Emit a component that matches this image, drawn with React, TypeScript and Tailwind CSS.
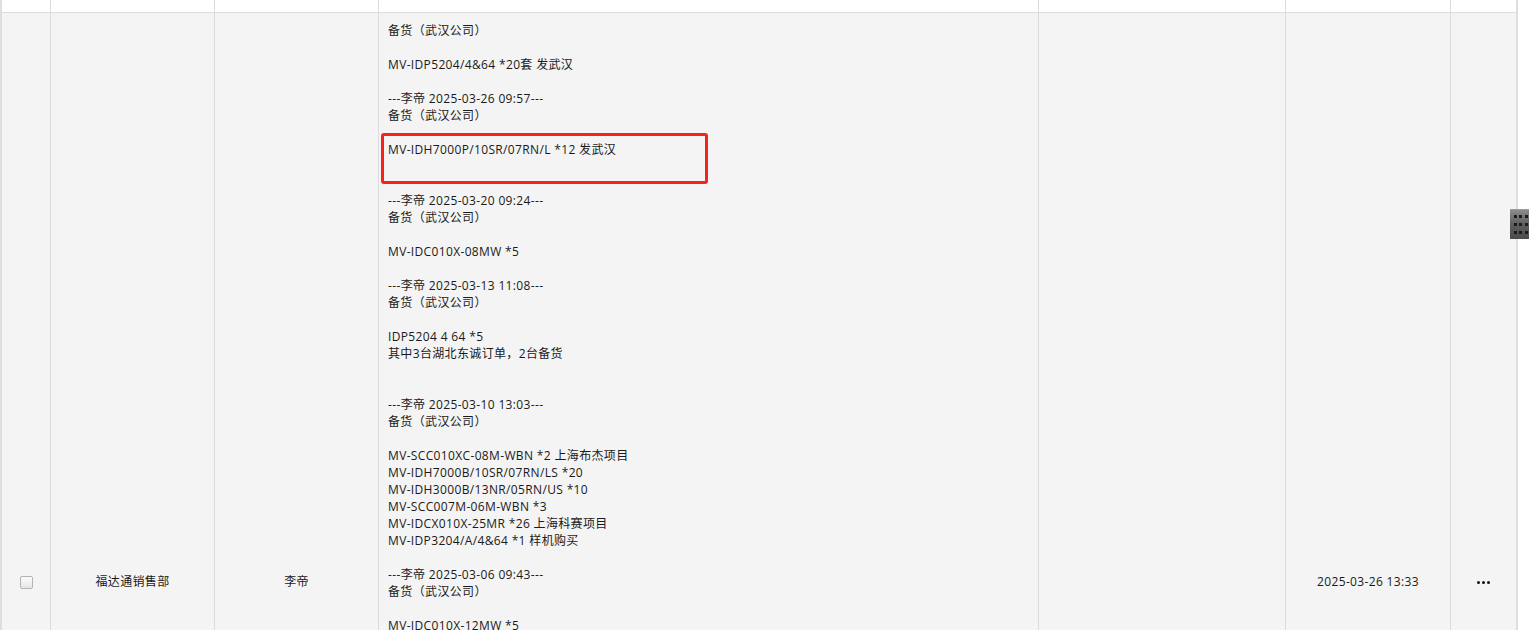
const notes = `备货（武汉公司）

MV-IDP5204/4&64 *20套 发武汉

---李帝 2025-03-26 09:57---
备货（武汉公司）

MV-IDH7000P/10SR/07RN/L *12 发武汉


---李帝 2025-03-20 09:24---
备货（武汉公司）

MV-IDC010X-08MW *5

---李帝 2025-03-13 11:08---
备货（武汉公司）

IDP5204 4 64 *5
其中3台湖北东诚订单，2台备货


---李帝 2025-03-10 13:03---
备货（武汉公司）

MV-SCC010XC-08M-WBN *2 上海布杰项目
MV-IDH7000B/10SR/07RN/LS *20
MV-IDH3000B/13NR/05RN/US *10
MV-SCC007M-06M-WBN *3
MV-IDCX010X-25MR *26 上海科赛项目
MV-IDP3204/A/4&64 *1 样机购买

---李帝 2025-03-06 09:43---
备货（武汉公司）

MV-IDC010X-12MW *5`;

const font = "font-['Segoe_UI','Open_Sans','Noto_Sans_CJK_SC',sans-serif]";

export default function App() {
  return (
    <div className={`relative w-[1529px] h-[630px] overflow-hidden bg-white text-[12px] tracking-[0.35px] text-[#1a1a1a] ${font}`}>
      <div className="w-[1518px] border-x-2 border-[#dedede]">
        {/* header (scrolled off) */}
        <div className="flex h-[13px] border-b border-[#dcdcdc] bg-white">
          <div className="w-[49px] border-r border-[#dcdcdc]" />
          <div className="w-[164px] border-r border-[#dcdcdc]" />
          <div className="w-[164px] border-r border-[#dcdcdc]" />
          <div className="w-[660px] border-r border-[#dcdcdc]" />
          <div className="w-[247px] border-r border-[#dcdcdc]" />
          <div className="w-[165px] border-r border-[#dcdcdc]" />
          <div className="flex-1" />
        </div>

        {/* record row */}
        <div className="flex h-[1138px] bg-[#f4f4f4]">
          <div className="w-[49px] border-r border-[#dcdcdc] flex items-center justify-center">
            <span className="w-[13px] h-[13px] rounded-[2px] border border-[#b4b4b4] bg-gradient-to-b from-[#fafafa] to-[#e6e6e6]" />
          </div>
          <div className="w-[164px] border-r border-[#dcdcdc] flex items-center justify-center">福达通销售部</div>
          <div className="w-[164px] border-r border-[#dcdcdc] flex items-center justify-center">李帝</div>
          <div className="w-[660px] border-r border-[#dcdcdc] pt-[9px] pl-[9px] leading-[17px] whitespace-pre-line">
            {notes}
          </div>
          <div className="w-[247px] border-r border-[#dcdcdc]" />
          <div className="w-[165px] border-r border-[#dcdcdc] flex items-center justify-center">2025-03-26 13:33</div>
          <div className="flex-1 flex items-center justify-center gap-[2px]">
            <span className="w-[3px] h-[3px] rounded-full bg-[#111]" />
            <span className="w-[3px] h-[3px] rounded-full bg-[#111]" />
            <span className="w-[3px] h-[3px] rounded-full bg-[#111]" />
          </div>
        </div>
      </div>

      {/* red annotation box */}
      <div className="absolute left-[381px] top-[133px] w-[327px] h-[51px] border-[3px] border-[#f5231c] rounded-[3px]" />

      {/* side grip */}
      <div className="absolute left-[1510px] top-[209px] w-[24px] h-[30px] border-t border-[#9a9a9a] bg-gradient-to-b from-[#8c8c8c] via-[#5e5e5e] to-[#4c4c4c] grid grid-cols-3 content-center justify-start gap-x-[2px] gap-y-[5px] pl-[4px] pr-[6px]">
        {Array.from({ length: 9 }).map((_, i) => (
          <span key={i} className="w-[3px] h-[3px] bg-[#1c1c1c]" />
        ))}
      </div>
    </div>
  );
}
